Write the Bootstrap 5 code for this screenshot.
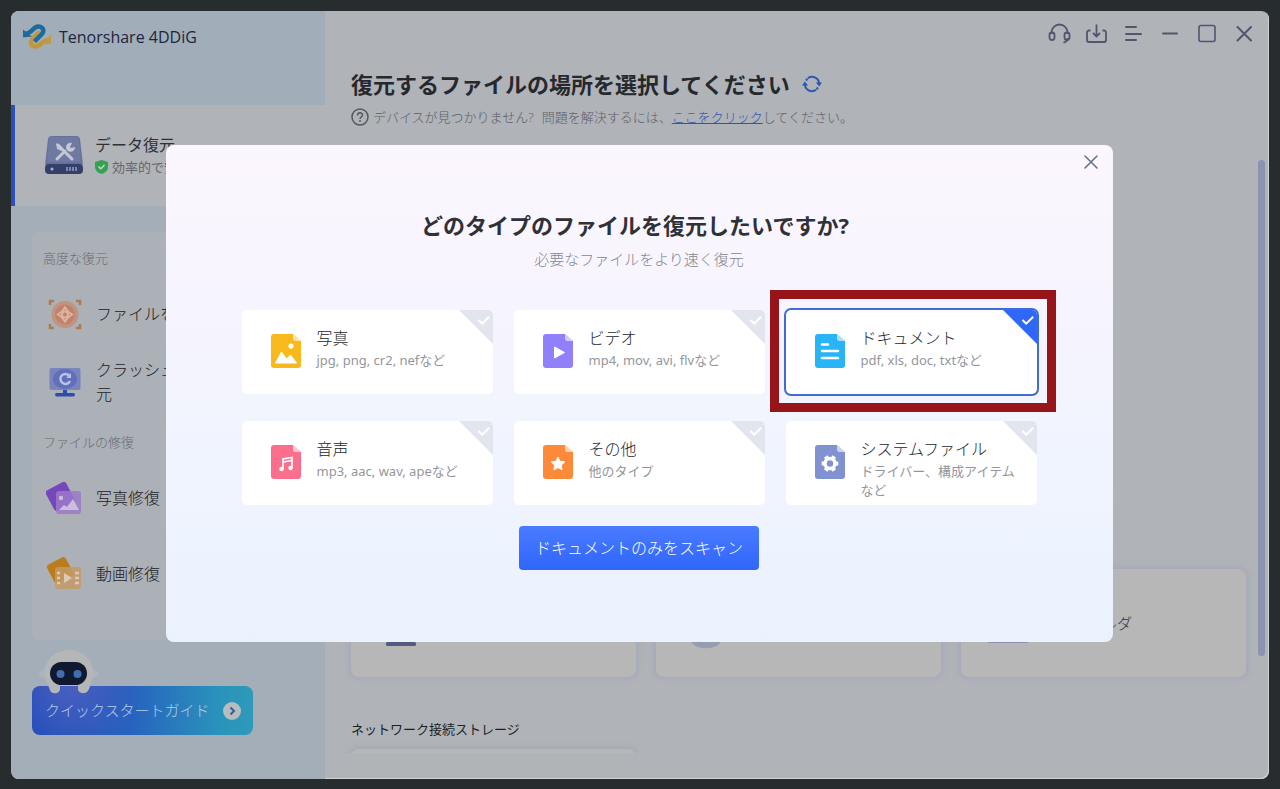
<!DOCTYPE html>
<html lang="ja">
<head>
<meta charset="utf-8">
<meta name="viewport" content="width=device-width, initial-scale=1">
<title>Tenorshare 4DDiG</title>
<link href="https://cdn.jsdelivr.net/npm/bootstrap@5.3.0/dist/css/bootstrap.min.css" rel="stylesheet">
<style>
  body { background: #272c2e; font-family: "Open Sans", "Noto Sans CJK JP", sans-serif; font-size: 13px; font-weight: 300; color: #2b2f36; }
  svg { display: block; flex: none; }
  .stage { height: 100vh; min-height: 760px; padding: 11px 11px 10px; }
  .app-window { background: #b0b3b8; border-radius: 8px; box-shadow: inset -1px -1px 0 #d0d3d6; }
  .side { width: 314px; background: #a3aeb8; border-radius: 8px 0 0 8px; }
  .brand { height: 94px; padding: 12px 12px 0; font-size: 16px; line-height: 28px; font-weight: 400; color: #1d2540; background: #a1adb9; }
  .side-active { height: 101px; background: #b0b3b8; border: 0; border-left: 4px solid #2b50b8; padding: 0 0 2px 30px; gap: 12px; color: #2e3138; }
  .side-active .name { font-size: 16px; line-height: 24px; }
  .side-active .note { line-height: 20px; color: #62666d; }
  .panel { margin: 26px 22px 0 21px; padding: 16px 32px 28px 11px; background: #abb1b7; border-radius: 8px; }
  .panel-label { line-height: 20px; color: #666b73; margin: 0; font-size: 13px; font-weight: 300; }
  .side-item { height: 68px; padding: 0 0 0 3px; gap: 12px; font-size: 16px; line-height: 24px; background: none; border: 0; color: #1d2025; text-align: left; font-weight: 300; }
  .side-item.tall { height: 76px; }
  .guide { margin: 46px 0 0 21px; width: 221px; height: 49px; border: 0; border-radius: 8px; padding: 0 12px 0 13px; font-size: 15px; color: #b5cdeb; font-weight: 300;
    background: radial-gradient(circle at 18% 0, #4a5ec0 0, transparent 36%), linear-gradient(90deg, #224cba 0%, #2763be 45%, #2a93bb 85%, #2f9aba 100%); }
  .robot { left: 6px; top: -37px; }
  .win-tools { padding: 11px 13px 0; gap: 13px; }
  .win-tools button, .plain { background: none; border: 0; padding: 0; }
  .main-head { padding: 22px 26px 0; }
  .head-row { gap: 12px; }
  .main-head h1 { font-size: 22px; line-height: 32px; font-weight: 700; margin: 0; color: #25282d; }
  .hint { line-height: 20px; margin-top: 7px; color: #5c6067; }
  .hint a { color: #2d56b4; }
  .scroller { padding: 0 8px 0 26px; margin-bottom: 26px; min-height: 0; }
  .drives { height: 442px; flex: none; }
  .place-grid { display: grid; grid-template-columns: repeat(3, minmax(0, 1fr)); gap: 20px; }
  .place { background: #b7b7b7; border-radius: 8px; height: 108px; flex: none; padding: 0 27px; gap: 14px; font-size: 15px; box-shadow: 0 0 5px 3px #a7abb9; border: 0; color: #2e3138; font-weight: 300; }
  .group-title { font-size: 13px; line-height: 20px; margin: 42px 0 10px; font-weight: 400; color: #1c1f24; }
  .thumb { width: 7px; height: 496px; border-radius: 4px; background: #8a93b0; margin: 33px 4px 0; flex: none; }
  .dialog-layer { inset: 0 2px 4px 0; padding: 0 16px; }
  .dialog-box { width: 100%; max-width: 947px; border-radius: 8px; padding: 63px 76px 72px; background: linear-gradient(180deg, #fcf7fe 0%, #f6f4fe 35%, #eff4fe 70%, #eaf2fe 100%); }
  .dialog-box h2 { font-size: 22px; line-height: 34px; font-weight: 700; margin: 0; padding-right: 8px; color: #2f3136; }
  .lead-text { font-size: 15px; line-height: 20px; margin: 7px 0 41px; color: #85878e; }
  .close-x { right: 14px; top: 9px; }
  .type-grid { display: grid; grid-template-columns: repeat(3, minmax(0, 1fr)); gap: 27px 21px; }
  .type-card { height: 84px; background: #fff; border-radius: 5px; padding: 17px 12px 0 29px; gap: 16px; cursor: pointer; }
  .type-card .doc { margin-top: 7px; }
  .type-card .t { font-size: 16px; line-height: 22px; color: #24262b; }
  .type-card .s { font-family: "Noto Sans", "Noto Sans CJK JP", sans-serif; line-height: 19px; margin-top: 2px; color: #94969c; font-weight: 400; }
  .corner { top: 0; right: 0; color: #e3e5ee; border-top-right-radius: 5px; }
  .type-card:has(input:checked) { box-shadow: 0 0 0 2px #3f6bd6; }
  input:checked ~ .corner { color: #2f68f8; }
  .marker { border: 9px solid #961519; inset: -20px -19px -18px -16px; z-index: 2; pointer-events: none; }
  .scan { width: 240px; height: 44px; margin-top: 21px; border: 0; border-radius: 4px; color: #fff; font-size: 16px; font-weight: 300; padding: 0; background: linear-gradient(180deg, #4a7bff, #2f66fb); }
</style>
</head>
<body>
<svg width="0" height="0" class="position-absolute" aria-hidden="true">
  <defs>
    <symbol id="sheet" viewBox="0 0 30 34"><path fill="currentColor" d="M3 0H22L30 7V31a3 3 0 0 1-3 3H3a3 3 0 0 1-3-3V3a3 3 0 0 1 3-3z"/><path fill="#fff" fill-opacity=".6" d="M22 0l8 7h-5.500a2.500 2.500 0 0 1-2.500-2.500z"/></symbol>
    <symbol id="fold" viewBox="0 0 34 34"><path fill="currentColor" d="M0 0H34V34z"/><path d="M19.500 10l3.700 3.700 7-7" fill="none" stroke="#fff" stroke-width="2"/></symbol>
  </defs>
</svg>
<div class="stage">
<div class="app-window position-relative d-flex h-100 overflow-hidden">

  <aside class="side d-flex flex-column flex-shrink-0">
    <div class="brand d-flex gap-2">
      <svg width="28" height="28" viewBox="0 0 28 28" fill="none" stroke-width="4.500"><path d="M17 9L9.500 16C6 20 8.500 23.500 12.500 23.500 18 23.500 19 17.500 25 17" stroke="#c0963a"/><path d="M28 11.500v9.500h-9z" fill="#c29a3d"/><path d="M3 10.500C9 10.500 10 3.500 15 3.500 20 3.500 22 7.500 18.500 11.500L11.500 18.500" stroke="#1f6a9d"/><path d="M0 6.500v8l9-1z" fill="#1f6a9d"/></svg>
      <span>Tenorshare 4DDiG</span>
    </div>
    <button type="button" class="side-active d-flex align-items-center text-start">
      <svg width="38" height="40" viewBox="0 0 38 40"><path d="M7 1h24a4 4 0 0 1 4 3l3 26H0L3 4a4 4 0 0 1 4-3z" fill="#66719b"/><path d="M7 2h24a3 3 0 0 1 3 3l2 22H2L4 5a3 3 0 0 1 3-3z" fill="#6f7aa3"/><rect y="29" width="38" height="10" rx="4" fill="#35406a"/><circle cx="7" cy="34" r="1.500" fill="#a5b3cc"/><path d="M22 32v4m3-4v4m3-4v4m3-4v4" stroke="#7d88aa" stroke-width="2"/><path d="M13 10l14 14M12 24l8-8" stroke="#c3c8d2" stroke-width="3" stroke-linecap="round"/><path d="M11 8l5 3 1 5-5-2z" fill="#c3c8d2"/><path d="M27 8a4.500 4.500 0 1 0 3 4l-4 1-1-1z" fill="#c3c8d2"/></svg>
      <span>
        <span class="name d-block">データ復元</span>
        <span class="note d-flex align-items-center gap-1"><svg width="13" height="14" viewBox="0 0 13 14"><path d="M6.500 0L13 2v5c0 3.500-3 6-6.500 7C3 13 0 10.500 0 7V2z" fill="#36a054"/><path d="M3.500 6.500l2.300 2.300L9.500 5" fill="none" stroke="#c5d5ca" stroke-width="1.500"/></svg>効率的で安全</span>
      </span>
    </button>

    <nav class="panel d-flex flex-column">
      <h3 class="panel-label mb-2 pb-1">高度な復元</h3>
      <button type="button" class="side-item d-flex align-items-center">
        <svg width="38" height="36" viewBox="0 0 38 36"><circle cx="19" cy="18.500" r="13.500" fill="#c2937f"/><circle cx="19" cy="18.500" r="10" fill="#c2826a"/><path d="M4 9V5h4M30 5h4v4M34 28v4h-4M8 32H4v-4" fill="none" stroke="#ae7a4e" stroke-width="2.500"/><path d="M19 11.500q2.500 4.500 7 7-4.500 2.500-7 7-2.500-4.500-7-7 4.500-2.500 7-7z" fill="none" stroke="#dcb5a0" stroke-width="2"/><circle cx="19" cy="18.500" r="3" fill="none" stroke="#dcb5a0" stroke-width="2"/></svg>
        <span>ファイルを復元</span>
      </button>
      <button type="button" class="side-item d-flex align-items-center">
        <svg width="38" height="36" viewBox="0 0 38 36"><rect x="3.500" y="4" width="31" height="22" rx="2" fill="#7884bb"/><ellipse cx="19" cy="15" rx="12" ry="10" fill="#5f6fba"/><path d="M23.500 12a5 5 0 1 0 .5 5" fill="none" stroke="#b9c2e0" stroke-width="2.500"/><path d="M25 9v5h-5z" fill="#b9c2e0"/><path d="M17 26h4v3h-4z" fill="#2d4dad"/><rect x="9" y="29" width="20" height="3.500" rx="1.700" fill="#2d4dad"/></svg>
        <span>クラッシュしたPCの復元</span>
      </button>
      <h3 class="panel-label mt-3 mb-2">ファイルの修復</h3>
      <button type="button" class="side-item tall d-flex align-items-center">
        <svg width="38" height="36" viewBox="0 0 38 36"><rect x="3" y="5" width="23" height="23" rx="3" fill="#7647ba" transform="rotate(-28 14 17)"/><rect x="10" y="11" width="25" height="23" rx="3" fill="#9c79c9" fill-opacity=".85"/><circle cx="15" cy="18" r="2.200" fill="#cbbddd"/><path d="M13 30l5-5 3 2 6-8 6 11z" fill="#cbbddd"/></svg>
        <span>写真修復</span>
      </button>
      <button type="button" class="side-item tall d-flex align-items-center">
        <svg width="38" height="36" viewBox="0 0 38 36"><rect x="4" y="4" width="21" height="21" rx="3" fill="#bd7c1c" transform="rotate(-28 14 15)"/><rect x="9" y="11" width="26" height="22" rx="3" fill="#c39a66" fill-opacity=".85"/><path d="M11 17h3m-3 5h3m-3 5h3m15-10h4m-4 5h4m-4 5h4" stroke="#dccbb2" stroke-width="2.500"/><path d="M18 17l8 5-8 5z" fill="#dccbb2"/></svg>
        <span>動画修復</span>
      </button>
    </nav>

    <button type="button" class="guide position-relative d-flex align-items-center justify-content-between">
      <svg class="robot position-absolute" width="62" height="46" viewBox="0 0 62 46"><path d="M1 24l8-6v12l-8-3zM61 24l-8-6v12l8-3z" fill="#adb4bf"/><path d="M31 1C17 1 7 11 7 23c0 7 3 13 5 18 1 5 10 4 10-1v-3h18v3c0 5 9 6 11 0 2-5 4-10 4-17C55 11 45 1 31 1z" fill="#b4b6b8"/><rect x="12" y="13" width="37" height="23" rx="11.500" fill="#101930"/><circle cx="22.500" cy="25" r="4" fill="#3f6fae"/><circle cx="39.500" cy="25" r="4" fill="#3f6fae"/></svg>
      <span>クイックスタートガイド</span>
      <svg width="18" height="18" viewBox="0 0 18 18"><circle cx="9" cy="9" r="9" fill="#b7bcc0"/><path d="M7.500 5.500L11 9l-3.500 3.500" fill="none" stroke="#35609a" stroke-width="2"/></svg>
    </button>
  </aside>

  <main class="flex-grow-1 d-flex flex-column overflow-hidden">
    <div class="win-tools d-flex justify-content-end">
      <button type="button" aria-label="サポート"><svg width="24" height="24" viewBox="0 0 24 24" fill="none" stroke="#4f566e" stroke-width="1.800"><path d="M4.500 12v-1.500a8 8 0 0 1 16 0V12M20.500 16c0 2.500-1 4-4 4.500"/><rect x="2.500" y="10.500" width="5" height="7.500" rx="2.500"/><rect x="17.500" y="10.500" width="5" height="7.500" rx="2.500"/></svg></button>
      <button type="button" aria-label="保存"><svg width="24" height="24" viewBox="0 0 24 24" fill="none" stroke="#4f566e" stroke-width="1.800"><path d="M6.500 8.500H5a2 2 0 0 0-2 2V18a2 2 0 0 0 2 2h15a2 2 0 0 0 2-2v-7.500a2 2 0 0 0-2-2h-1.500M12.500 2.500v12M9 11l3.500 3.500L16 11"/></svg></button>
      <button type="button" aria-label="メニュー"><svg width="24" height="24" viewBox="0 0 24 24" stroke="#4f566e" stroke-width="2" stroke-linecap="round"><path d="M5 5h10M5 12h15M5 18h10"/></svg></button>
      <button type="button" aria-label="最小化"><svg width="24" height="24" viewBox="0 0 24 24" stroke="#4f566e" stroke-width="2" stroke-linecap="round"><path d="M5 11.500h14"/></svg></button>
      <button type="button" aria-label="最大化"><svg width="24" height="24" viewBox="0 0 24 24" fill="none" stroke="#4f566e" stroke-width="1.600"><rect x="4" y="3.500" width="16" height="16" rx="2"/></svg></button>
      <button type="button" aria-label="閉じる"><svg width="24" height="24" viewBox="0 0 24 24" stroke="#4f566e" stroke-width="2" stroke-linecap="round"><path d="M5.500 5l13.500 13.500M19 5L5.500 18.500"/></svg></button>
    </div>
    <div class="main-head">
      <div class="head-row d-flex align-items-center">
        <h1>復元するファイルの場所を選択してください</h1>
        <button type="button" class="plain" aria-label="更新"><svg width="20" height="18" viewBox="0 0 20 18" fill="none" stroke="#2b56b5" stroke-width="2"><path d="M6 3.100A7.200 7.200 0 0 1 17.200 9M14 14.900A7.200 7.200 0 0 1 2.800 9M4 5.500l1.500-1.800M16 12.500l-1.500 1.800"/><path d="M13.800 7.500H20l-2.800 4zM6.200 10.500H0l2.800-4z" fill="#2b56b5" stroke="none"/></svg></button>
      </div>
      <div class="hint d-flex align-items-center gap-1">
        <svg width="18" height="18" viewBox="0 0 18 18" fill="none" stroke="#53575e" stroke-width="1.500"><circle cx="9" cy="9" r="8"/><path d="M6.500 7.500c0-3.500 5-3.500 5-.500 0 2-2.500 2-2.500 4M9 12v1.700"/></svg>
        <span>デバイスが見つかりません?</span>
        <span class="ms-1">問題を解決するには、<a href="#">ここをクリック</a>してください。</span>
      </div>
    </div>
    <div class="d-flex flex-grow-1 overflow-hidden">
      <div class="scroller flex-grow-1 d-flex flex-column overflow-hidden">
        <div class="drives"></div>
        <div class="place-grid flex-shrink-0">
          <button type="button" class="place d-flex align-items-center" aria-label="デスクトップ"><svg width="46" height="46" viewBox="0 0 46 46"><rect x="3" y="5" width="40" height="28" rx="3" fill="#717aa6"/><path d="M18 33h10l2 8H16z" fill="#5c648c"/><rect x="8" y="42" width="30" height="4" rx="1.500" fill="#535b83"/></svg></button>
          <button type="button" class="place d-flex align-items-center" aria-label="ごみ箱"><svg width="46" height="54" viewBox="0 0 46 54"><path d="M4 6h38l-4 38c-1 11-29 11-30 0z" fill="#969cb2"/></svg></button>
          <button type="button" class="place d-flex align-items-center"><svg width="40" height="40" viewBox="0 0 40 40"><path d="M0 5h15l4 5h21v29a1 1 0 0 1-1 1H1a1 1 0 0 1-1-1z" fill="#8b93b0"/></svg><span>特定フォルダ</span></button>
        </div>
        <h4 class="group-title flex-shrink-0">ネットワーク接続ストレージ</h4>
        <div class="place-grid flex-shrink-0"><div class="place"></div></div>
      </div>
      <div class="thumb"></div>
    </div>
  </main>

  <div class="dialog-layer position-absolute d-flex align-items-center justify-content-center">
    <section class="dialog-box position-relative text-center" role="dialog" aria-labelledby="dlg-title">
      <button type="button" class="plain close-x position-absolute" aria-label="閉じる"><svg width="16" height="16" viewBox="0 0 16 16" stroke="#66718c" stroke-width="1.600" stroke-linecap="round"><path d="M2 2l12 12M14 2L2 14"/></svg></button>
      <h2 id="dlg-title">どのタイプのファイルを復元したいですか?</h2>
      <p class="lead-text">必要なファイルをより速く復元</p>
      <div class="type-grid text-start">
        <label class="type-card position-relative d-flex">
          <input type="checkbox" class="visually-hidden">
          <svg class="doc" width="30" height="34" viewBox="0 0 30 34" color="#f8b91c"><use href="#sheet"/><path fill="#fff" stroke="#fff" stroke-linejoin="round" d="M4.500 29L10.500 18l5 7 4-4 6 8z"/><circle cx="20" cy="12" r="2.600" fill="#fff"/></svg>
          <span><span class="t d-block">写真</span><span class="s d-block">jpg, png, cr2, nefなど</span></span>
          <svg class="corner position-absolute" width="34" height="34"><use href="#fold"/></svg>
        </label>
        <label class="type-card position-relative d-flex">
          <input type="checkbox" class="visually-hidden">
          <svg class="doc" width="30" height="34" viewBox="0 0 30 34" color="#9080fb"><use href="#sheet"/><path fill="#fff" stroke="#fff" stroke-linejoin="round" d="M11.500 13v11l10-5.500z"/></svg>
          <span><span class="t d-block">ビデオ</span><span class="s d-block">mp4, mov, avi, flvなど</span></span>
          <svg class="corner position-absolute" width="34" height="34"><use href="#fold"/></svg>
        </label>
        <label class="type-card position-relative d-flex">
          <input type="checkbox" class="visually-hidden" checked>
          <svg class="doc" width="30" height="34" viewBox="0 0 30 34" color="#28b4f5"><use href="#sheet"/><path stroke="#fff" stroke-width="2.600" stroke-linecap="round" d="M7 10.500h6M7 17h16M7 24h16"/></svg>
          <span><span class="t d-block">ドキュメント</span><span class="s d-block">pdf, xls, doc, txtなど</span></span>
          <svg class="corner position-absolute" width="34" height="34"><use href="#fold"/></svg>
          <span class="marker position-absolute"></span>
        </label>
        <label class="type-card position-relative d-flex">
          <input type="checkbox" class="visually-hidden">
          <svg class="doc" width="30" height="34" viewBox="0 0 30 34" color="#fb6f8d"><use href="#sheet"/><path d="M12 24V14l9-1.500V23M12 17l9-1.500" fill="none" stroke="#fff" stroke-width="1.700"/><circle cx="10.500" cy="24" r="2.200" fill="#fff"/><circle cx="19.500" cy="23" r="2.200" fill="#fff"/></svg>
          <span><span class="t d-block">音声</span><span class="s d-block">mp3, aac, wav, apeなど</span></span>
          <svg class="corner position-absolute" width="34" height="34"><use href="#fold"/></svg>
        </label>
        <label class="type-card position-relative d-flex">
          <input type="checkbox" class="visually-hidden">
          <svg class="doc" width="30" height="34" viewBox="0 0 30 34" color="#fd8a38"><use href="#sheet"/><path fill="#fff" stroke="#fff" stroke-linejoin="round" d="M15 12l2 4.300 4.700.600-3.400 3.300.800 4.600-4.100-2.200-4.100 2.200.800-4.600-3.400-3.300 4.700-.600z"/></svg>
          <span><span class="t d-block">その他</span><span class="s d-block">他のタイプ</span></span>
          <svg class="corner position-absolute" width="34" height="34"><use href="#fold"/></svg>
        </label>
        <label class="type-card position-relative d-flex">
          <input type="checkbox" class="visually-hidden">
          <svg class="doc" width="30" height="34" viewBox="0 0 30 34" color="#8092cf"><use href="#sheet"/><circle cx="15" cy="18.500" r="5" fill="none" stroke="#fff" stroke-width="3.600"/><path d="M21 18.500h2.300M18 23.700l1.200 2M12 23.700l-1.200 2M9 18.500H6.700M12 13.300l-1.200-2M18 13.300l1.200-2" stroke="#fff" stroke-width="4.200"/></svg>
          <span><span class="t d-block">システムファイル</span><span class="s d-block">ドライバー、構成アイテムなど</span></span>
          <svg class="corner position-absolute" width="34" height="34"><use href="#fold"/></svg>
        </label>
      </div>
      <button type="button" class="scan">ドキュメントのみをスキャン</button>
    </section>
  </div>
</div>
</div>
<script src="https://cdn.jsdelivr.net/npm/bootstrap@5.3.0/dist/js/bootstrap.bundle.min.js"></script>
</body>
</html>
